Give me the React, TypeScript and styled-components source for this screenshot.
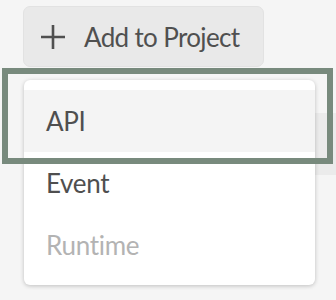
import React from 'react';
import styled, { createGlobalStyle } from 'styled-components';

const GlobalStyle = createGlobalStyle`
  body {
    margin: 0;
    background: #f5f5f5;
    font-family: Lato, "Open Sans", sans-serif;
  }
`;

const items = [
  { label: 'API', active: true },
  { label: 'Event' },
  { label: 'Runtime', disabled: true },
];

const PlusIcon = () => (
  <svg width="26" height="26" viewBox="0 0 26 26">
    <path d="M13 1v24M1 13h24" stroke="#505050" strokeWidth="2.6" fill="none" />
  </svg>
);

const App: React.FC = () => {
  return (
    <Page>
      <GlobalStyle />
      <AddButton type="button">
        <PlusIcon />
        <span>Add to Project</span>
      </AddButton>
      <Band />
      <Menu>
        {items.map((item) => (
          <MenuItem key={item.label} $active={item.active} $disabled={item.disabled}>
            {item.label}
          </MenuItem>
        ))}
      </Menu>
      <Highlight />
    </Page>
  );
};

const Page = styled.div`
  position: relative;
  height: 300px;
  padding-top: 6px;
  box-sizing: border-box;
  overflow: hidden;
`;

const AddButton = styled.button`
  display: flex;
  align-items: center;
  gap: 18px;
  margin-left: 23px;
  width: 241px;
  height: 61px;
  box-sizing: border-box;
  padding: 0 0 0 16px;
  background: #e9e9e9;
  border: 1px solid #e2e2e2;
  border-radius: 7px;
  font-family: Lato, "Open Sans", sans-serif;
  font-size: 26px;
  color: #505050;
  letter-spacing: -0.65px;
`;

const Band = styled.div`
  margin: 46px 0 0 200px;
  height: 62px;
  background: #ebebeb;
`;

const Menu = styled.div`
  position: absolute;
  left: 24px;
  top: 80px;
  width: 291px;
  height: 205px;
  box-sizing: border-box;
  padding: 10px 0;
  background: #fff;
  border-radius: 6px;
  box-shadow: 0 1px 4px rgba(0, 0, 0, 0.22);
`;

const MenuItem = styled.div<{ $active?: boolean; $disabled?: boolean }>`
  display: flex;
  align-items: center;
  height: 62px;
  padding-left: 22px;
  font-size: 26px;
  letter-spacing: -0.3px;
  color: ${(p) => (p.$disabled ? '#b3b3b3' : '#4f4f4f')};
  background: ${(p) => (p.$active ? '#f4f4f4' : 'transparent')};
`;

const Highlight = styled.div`
  position: absolute;
  left: 2px;
  top: 68px;
  width: 331px;
  height: 96px;
  box-sizing: border-box;
  border: 6px solid #788a7d;
`;

export default App;
